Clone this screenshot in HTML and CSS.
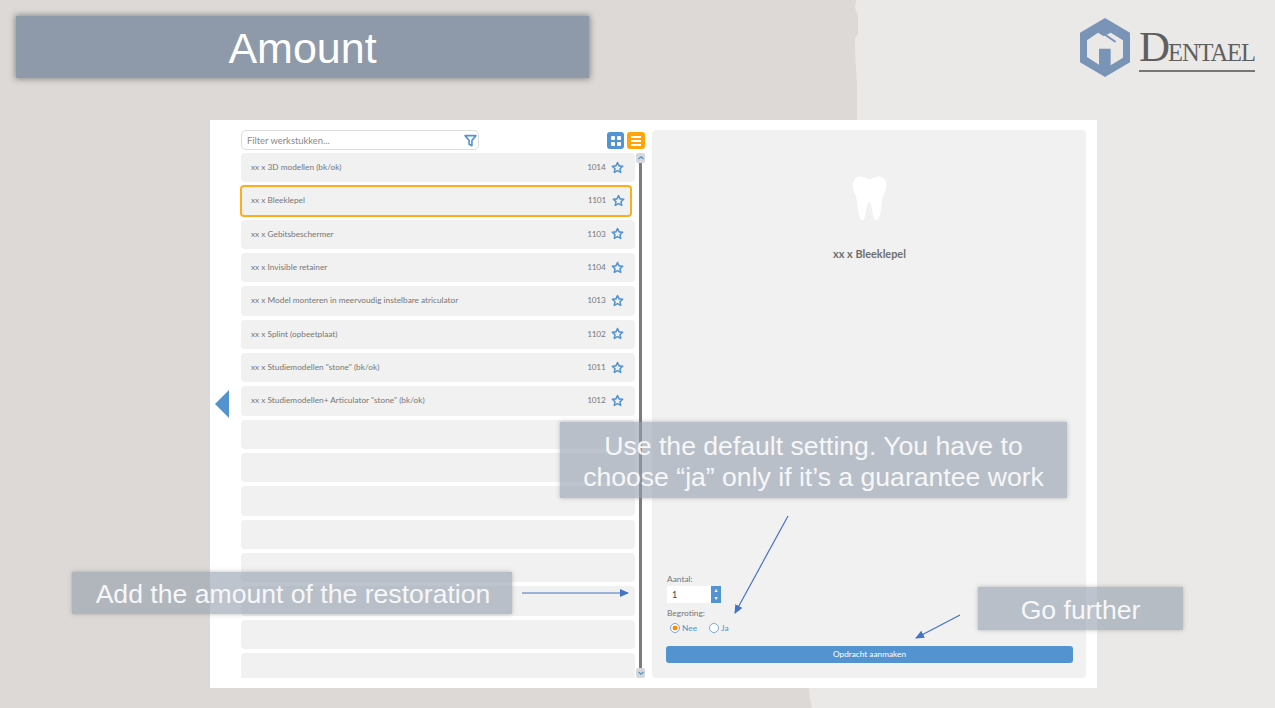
FILE: index.html
```html
<!DOCTYPE html>
<html>
  <head>
    <meta charset="UTF-8" />
    <title>Amount</title>
    <link rel="stylesheet" href="styles.css">
  </head>
  <body>
    <svg class="defs" width="0" height="0">
      <symbol id="star" viewBox="0 0 24 24">
        <path d="M12 2.8l2.9 6.2 6.7.8-5 4.6 1.4 6.7-6-3.4-6 3.4 1.4-6.7-5-4.6 6.7-.8z" fill="none" stroke="#5393d0" stroke-width="2.8" stroke-linejoin="round" />
      </symbol>
    </svg>
    <div class="slide">
      <div class="paper"></div>

      <header class="slide-head">
        <h1 class="title">Amount</h1>
        <div class="logo">
          <svg class="logo-mark" viewBox="121 54 150 177" width="50" height="59">
            <path d="M196 54L271 98V187L196 231L121 187V98Z" fill="#7a94b8" />
            <path d="M142 121L175 98L192 109L213 98L250 121V173L213 196V146H178V194L142 171Z" fill="#ebe9e7" />
            <path d="M196 104L228 126" stroke="#7a94b8" stroke-width="6" fill="none" />
          </svg>
          <div class="logo-word"><span class="logo-cap">D</span>entael</div>
        </div>
      </header>

      <main class="window">
        <div class="gutter"><div class="back-arrow"></div></div>

        <section class="list-col">
          <div class="toolbar">
            <div class="search">
              <span>Filter werkstukken...</span>
              <svg viewBox="0 0 12 12" width="13" height="13"><path d="M1 1.5h10L7.3 6v4.8L4.7 9.4V6z" fill="none" stroke="#5393d0" stroke-width="1.5" stroke-linejoin="round" /></svg>
            </div>
            <div class="toggle toggle-grid"><i></i><i></i><i></i><i></i></div>
            <div class="toggle toggle-list"><b></b><b></b><b></b></div>
          </div>
          <div class="list-wrap">
            <div class="rows">
              <div class="row"><span class="row-name">xx x 3D modellen (bk/ok)</span><span class="row-code">1014</span><svg class="star"><use href="#star" /></svg></div>
              <div class="row selected"><span class="row-name">xx x Bleeklepel</span><span class="row-code">1101</span><svg class="star"><use href="#star" /></svg></div>
              <div class="row"><span class="row-name">xx x Gebitsbeschermer</span><span class="row-code">1103</span><svg class="star"><use href="#star" /></svg></div>
              <div class="row"><span class="row-name">xx x Invisible retainer</span><span class="row-code">1104</span><svg class="star"><use href="#star" /></svg></div>
              <div class="row"><span class="row-name">xx x Model monteren in meervoudig instelbare atriculator</span><span class="row-code">1013</span><svg class="star"><use href="#star" /></svg></div>
              <div class="row"><span class="row-name">xx x Splint (opbeetplaat)</span><span class="row-code">1102</span><svg class="star"><use href="#star" /></svg></div>
              <div class="row"><span class="row-name">xx x Studiemodellen "stone" (bk/ok)</span><span class="row-code">1011</span><svg class="star"><use href="#star" /></svg></div>
              <div class="row"><span class="row-name">xx x Studiemodellen+ Articulator "stone" (bk/ok)</span><span class="row-code">1012</span><svg class="star"><use href="#star" /></svg></div>
              <div class="row"></div>
              <div class="row"></div>
              <div class="row"></div>
              <div class="row"></div>
              <div class="row"></div>
              <div class="row"></div>
              <div class="row"></div>
              <div class="row"></div>
            </div>
            <div class="scrollbar">
              <div class="sb-btn"><svg viewBox="0 0 8 8" width="8" height="8"><path d="M1.5 5L4 2.8 6.5 5" fill="none" stroke="#5393d0" stroke-width="1.1" /></svg></div>
              <div class="sb-track"></div>
              <div class="sb-btn"><svg viewBox="0 0 8 8" width="8" height="8"><path d="M1.5 3L4 5.2 6.5 3" fill="none" stroke="#5393d0" stroke-width="1.1" /></svg></div>
            </div>
          </div>
        </section>

        <section class="panel">
          <svg class="tooth" viewBox="150 72 118 146" width="39" height="48">
            <path d="M186 80C170 76 158 90 158 108C158 125 170 135 172 160C174 185 178 212 188 213C198 213 198 160 208 158C218 158 218 213 229 213C240 212 245 180 246 160C248 135 260 125 260 105C260 88 248 76 232 80C222 82 216 88 208 88C200 88 196 82 186 80Z" fill="#fff" />
          </svg>
          <div class="panel-name">xx x Bleeklepel</div>
          <div class="form">
            <label class="form-label">Aantal:</label>
            <div class="stepper">
              <div class="stepper-value">1</div>
              <div class="stepper-btns"><span>▴</span><span>▾</span></div>
            </div>
            <label class="form-label form-label-gap">Begroting:</label>
            <div class="radios">
              <span class="radio radio-on"></span><span class="radio-text">Nee</span>
              <span class="radio"></span><span class="radio-text">Ja</span>
            </div>
            <div class="submit">Opdracht aanmaken</div>
          </div>
        </section>
      </main>

      <div class="note note-default">Use the default setting. You have to<br />choose “ja” only if it’s a guarantee work</div>
      <div class="note note-amount">Add the amount of the restoration</div>
      <div class="note note-further">Go further</div>

      <svg class="arrows" width="1275" height="708">
        <defs>
          <marker id="head" markerWidth="9" markerHeight="8" refX="8" refY="4" orient="auto" markerUnits="userSpaceOnUse">
            <path d="M0 0L9 4L0 8Z" fill="#4472c4" />
          </marker>
        </defs>
        <line x1="522" y1="593" x2="628" y2="593" marker-end="url(#head)" />
        <line x1="788" y1="516" x2="735" y2="613" marker-end="url(#head)" />
        <line x1="960" y1="615" x2="916" y2="638" marker-end="url(#head)" />
      </svg>
    </div>
  </body>
</html>
```

FILE: styles.css
```css
* { box-sizing: border-box; }

body {
	margin: 0;
	background: #dcd9d6;
	font-family: "Lato", sans-serif;
}

.defs { position: absolute; }

.slide {
	position: relative;
	width: 1275px;
	height: 708px;
	overflow: hidden;
	background: #dcd9d6;
}

/* lighter torn paper on the right */
.paper {
	position: absolute;
	inset: 0;
	background: #ebe9e7;
	clip-path: polygon(856px 0, 855px 8px, 858px 16px, 858px 34px, 855px 38px, 855px 50px, 857px 85px, 857px 688px, 809px 688px, 810px 700px, 812px 708px, 1275px 708px, 1275px 0);
}

/* header */
.slide-head {
	position: relative;
	display: flex;
	justify-content: space-between;
	height: 120px;
	padding: 16px 20px 0 16px;
}
.title {
	width: 573px;
	height: 62px;
	margin: 0;
	background: #8e99a9;
	box-shadow: 0 0 6px 1px #8a8a88;
	color: #fff;
	font: normal 43px/64px "Liberation Sans", sans-serif;
	text-align: center;
}
.logo {
	display: flex;
	align-items: flex-start;
	gap: 9px;
	padding-top: 2px;
}
.logo-word {
	width: 116px;
	height: 54px;
	padding-top: 9px;
	border-bottom: 2px solid #777;
	color: #5f5f5f;
	font: 24.5px/40px "Liberation Serif", serif;
	text-transform: uppercase;
	letter-spacing: -1.1px;
	white-space: nowrap;
}
.logo-cap {
	font-size: 43px;
	line-height: 40px;
	letter-spacing: -2px;
}

/* app window */
.window {
	position: relative;
	display: flex;
	width: 887px;
	height: 568px;
	margin-left: 210px;
	padding: 10px 11px 10px 0;
	background: #fff;
}
.gutter {
	display: flex;
	align-items: center;
	width: 31px;
	padding-left: 5px;
}
.back-arrow {
	width: 0;
	height: 0;
	border-top: 14px solid transparent;
	border-bottom: 14px solid transparent;
	border-right: 14px solid #5393d0;
}

.list-col {
	display: flex;
	flex-direction: column;
	width: 404px;
	margin-right: 7px;
}
.toolbar {
	display: flex;
	align-items: flex-start;
	height: 23px;
}
.search {
	display: flex;
	align-items: center;
	justify-content: space-between;
	width: 238px;
	height: 20px;
	margin-right: 128px;
	padding: 0 1px 0 5px;
	border: 1px solid #dcdcdc;
	border-radius: 5px;
	color: #8a8a8a;
	font-size: 9.4px;
}
.toggle {
	width: 17px;
	height: 17px;
	margin-top: 2px;
	border-radius: 3px;
}
.toggle-grid {
	display: grid;
	grid-template-columns: 4px 4px;
	gap: 2px;
	align-content: center;
	justify-content: center;
	background: #5393d0;
}
.toggle-grid i { background: #fff; border-radius: 1px; height: 4px; }
.toggle-list {
	display: flex;
	flex-direction: column;
	justify-content: center;
	gap: 2px;
	width: 18px;
	margin-left: 3px;
	padding: 0 4px;
	background: #ffa50a;
}
.toggle-list b { height: 2px; background: #fff; }

.list-wrap {
	display: flex;
	height: 525px;
}
.rows {
	width: 395px;
	height: 525px;
	margin-left: -1px;
	padding-left: 1px;
	overflow: hidden;
}
.row {
	display: flex;
	align-items: center;
	width: 394px;
	height: 29.33px;
	margin-bottom: 4px;
	padding: 0 11px 1px 10px;
	border-radius: 4px;
	background: #f1f1f1;
	color: #777;
	font-size: 8.25px;
}
.row.selected {
	width: 392px;
	height: 31.33px;
	margin: -1px 0 3px -1px;
	padding: 0 5.5px 1px 9px;
	border: 2px solid #ffad1f;
}
.row-name { flex: 1; }
.row-code { margin-right: 5.5px; font-size: 8.25px; letter-spacing: -0.2px; }
.star { width: 13px; height: 13px; }

.scrollbar {
	display: flex;
	flex-direction: column;
	align-items: center;
	width: 9px;
	height: 525px;
	margin-left: 1px;
}
.sb-btn {
	display: flex;
	align-items: center;
	justify-content: center;
	width: 9px;
	height: 10px;
	border-radius: 2px;
	background: #d5d7da;
}
.sb-track {
	flex: 1;
	width: 2.5px;
	background: #7c7c7c;
}

/* detail panel */
.panel {
	display: flex;
	flex-direction: column;
	align-items: center;
	width: 434px;
	padding: 44px 13px 15px 14px;
	border-radius: 4px;
	background: #f1f1f1;
}
.tooth { display: block; }
.panel-name {
	margin-top: 25px;
	color: #6f6f6f;
	font-size: 10.9px;
	font-weight: 700;
}
.form {
	align-self: stretch;
	margin-top: auto;
	display: flex;
	flex-direction: column;
	align-items: flex-start;
	color: #777;
	font-size: 8.4px;
}
.form-label { margin-left: 1px; line-height: 11px; }
.form-label-gap { margin-top: 5px; }
.stepper {
	display: flex;
	width: 54px;
	height: 17px;
	margin: 1px 0 0 1px;
}
.stepper-value {
	flex: 1;
	padding-left: 5px;
	background: #fff;
	color: #444;
	font-size: 9px;
	line-height: 17px;
}
.stepper-btns {
	display: flex;
	flex-direction: column;
	width: 10px;
	background: #5393d0;
	color: #fff;
	font: 6px/8px "DejaVu Sans", sans-serif;
	text-align: center;
}
.radios {
	display: flex;
	align-items: center;
	height: 14px;
	margin: 2px 0 0 4px;
	color: #5393d0;
	font-size: 8.4px;
}
.radio {
	width: 10px;
	height: 10px;
	margin-right: 2px;
	border: 1px solid #7aa9d8;
	border-radius: 50%;
	background: #fff;
}
.radio-on {
	background: radial-gradient(circle, #ff8c00 0 2.2px, #fff 2.7px);
}
.radio-text { margin-right: 12px; }
.submit {
	align-self: stretch;
	height: 17px;
	margin-top: 11px;
	border-radius: 3px;
	background: #5393d0;
	color: #fff;
	font-size: 8.25px;
	line-height: 17px;
	text-align: center;
}

/* annotations laid over the screenshot */
.note {
	position: absolute;
	background: rgba(150, 160, 175, 0.62);
	box-shadow: 0 0 4px rgba(120, 120, 125, 0.5);
	color: #f6f7f8;
	font-family: "Liberation Sans", sans-serif;
	font-size: 26.6px;
	text-align: center;
}
.note-default {
	left: 560px;
	top: 422px;
	width: 507px;
	height: 76px;
	padding-top: 9px;
	line-height: 31px;
}
.note-amount {
	left: 72px;
	top: 572px;
	width: 440px;
	height: 42px;
	padding-left: 2px;
	line-height: 44px;
}
.note-further {
	left: 978px;
	top: 587px;
	width: 205px;
	height: 43px;
	line-height: 46px;
}
.arrows {
	position: absolute;
	left: 0;
	top: 0;
	pointer-events: none;
}
.arrows line {
	stroke: #4472c4;
	stroke-width: 1.2;
}
```
